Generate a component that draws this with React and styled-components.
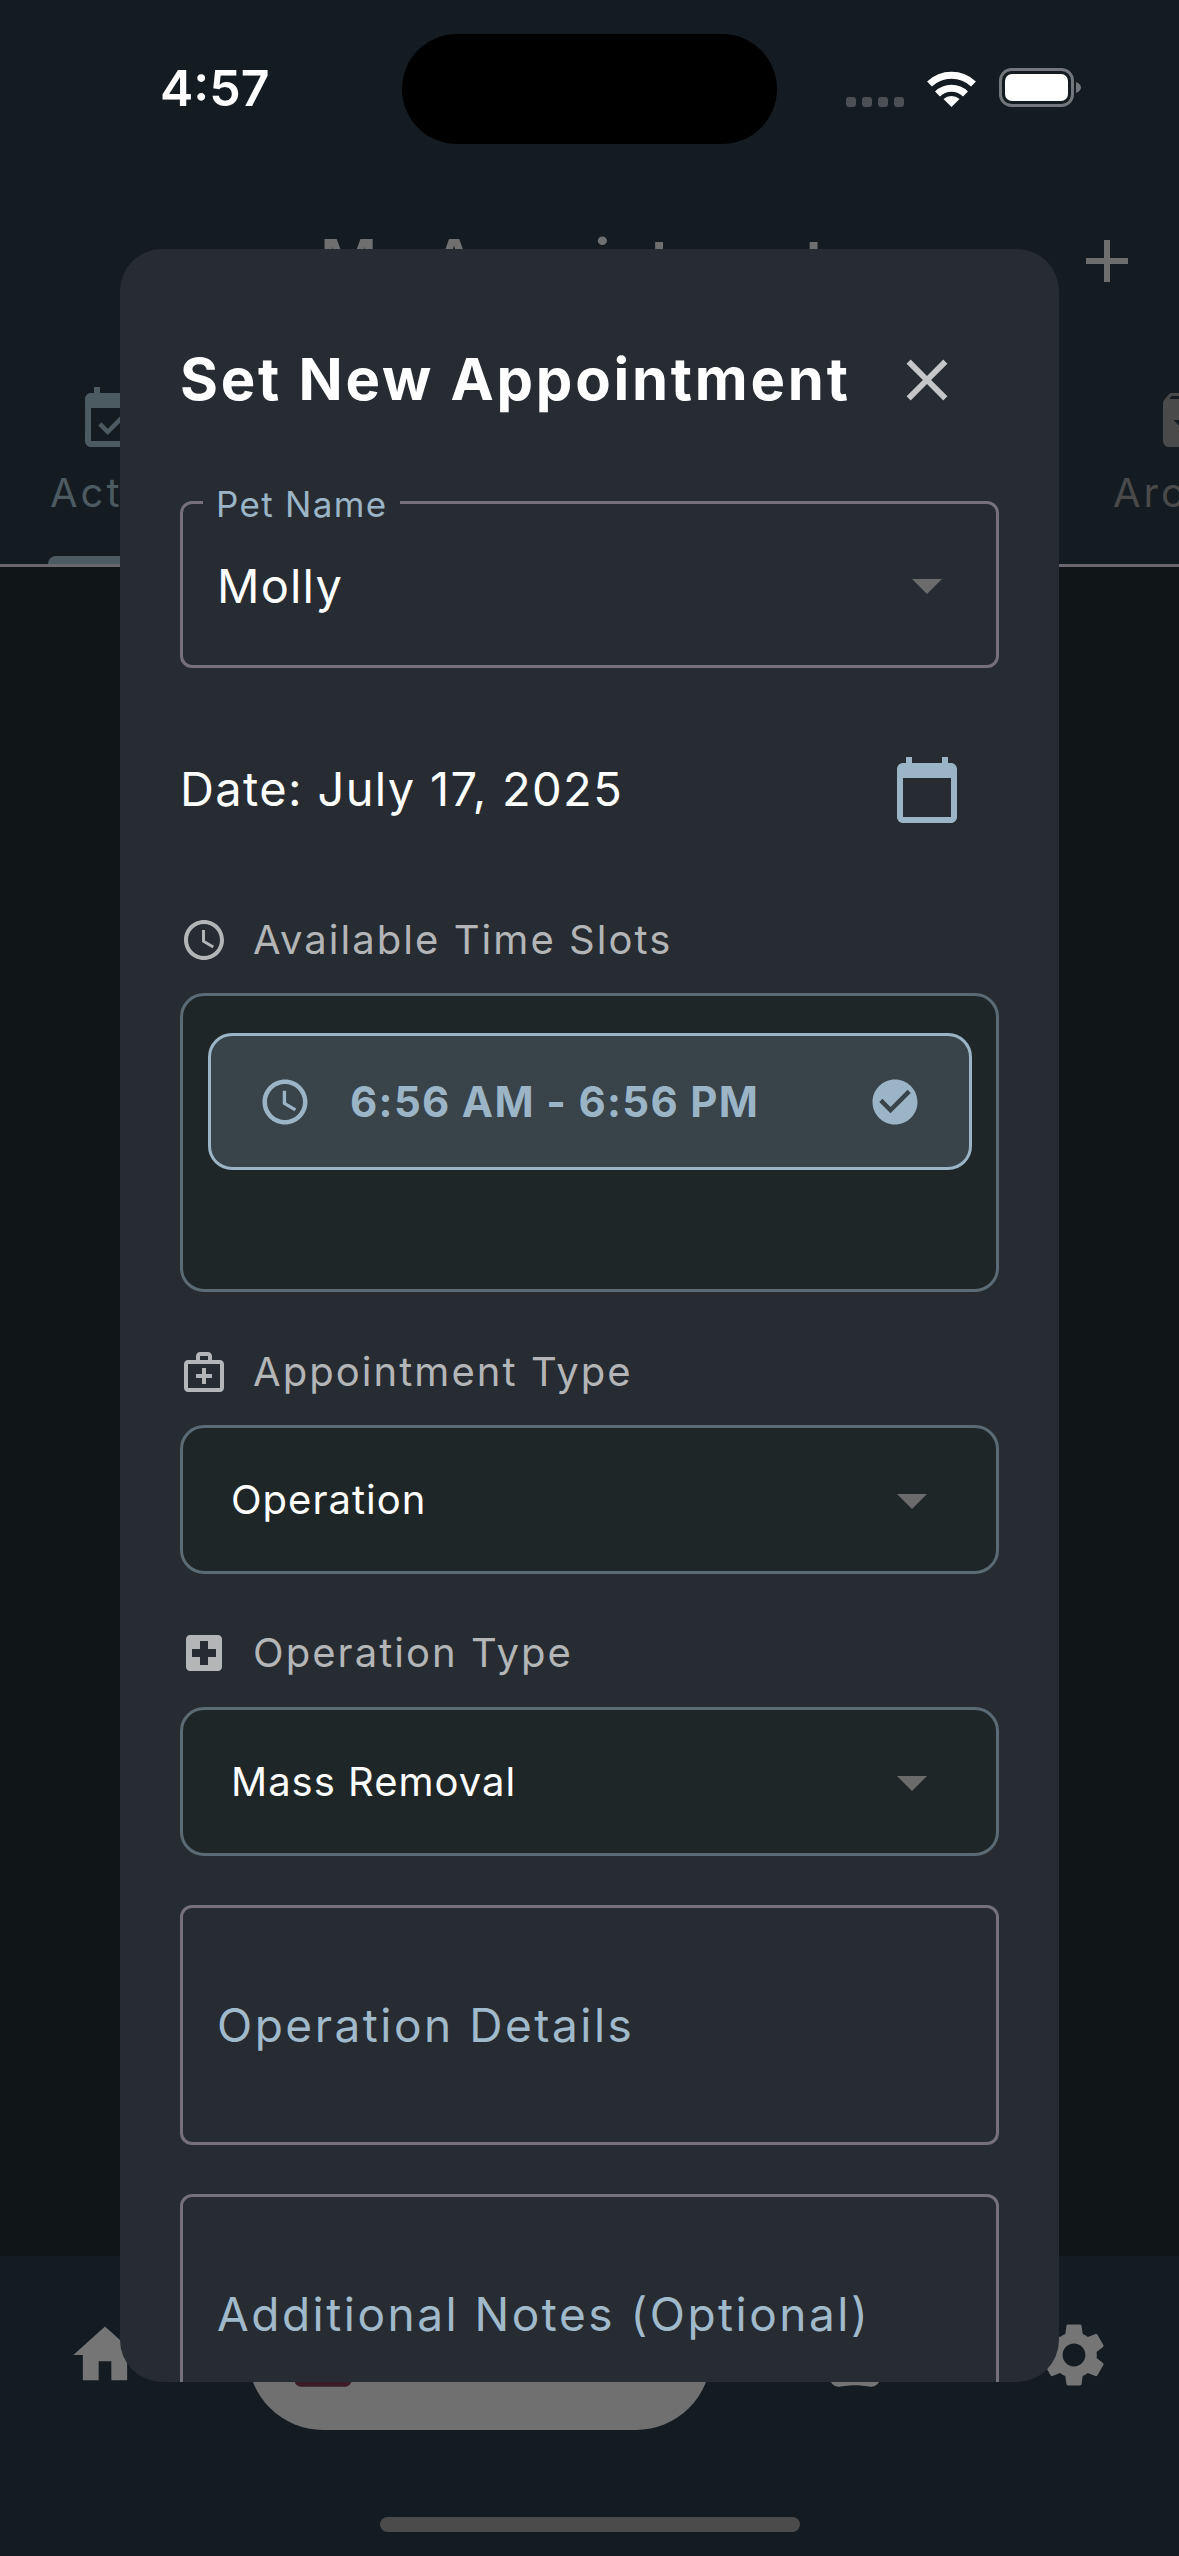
import React from "react";
import styled, { createGlobalStyle } from "styled-components";

const Global = createGlobalStyle`
  html, body { margin: 0; padding: 0; background: #141b21; }
  * { box-sizing: border-box; }
  body { font-family: Inter, "Liberation Sans", sans-serif; -webkit-font-smoothing: antialiased; }
`;

const Screen = styled.div`
  position: relative;
  width: 1179px;
  height: 2556px;
  overflow: hidden;
  background: #141b21;
  display: flex;
  flex-direction: column;
`;
const StatusBar = styled.div`
  height: 180px;
  padding-top: 34px;
  display: grid;
  grid-template-columns: 402px 375px 1fr;
  align-items: start;
`;
const Time = styled.div`
  padding: 22px 0 0 160px;
  color: #fff;
  font-size: 50px;
  line-height: 64px;
  font-weight: 600;
  letter-spacing: 0;
`;
const Island = styled.div`
  height: 110px;
  border-radius: 55px;
  background: #000;
`;
const StatusIcons = styled.div`
  display: flex;
  align-items: flex-end;
  padding: 34px 0 0 69px;
  height: 73px;
`;
const Dots = styled.div`
  display: flex;
  gap: 6px;
  margin-right: 22px;
`;
const Dot = styled.span`
  width: 10px;
  height: 10px;
  border-radius: 3px;
  background: #4c5054;
`;
const Header = styled.div`
  height: 162px;
  display: flex;
  align-items: center;
  justify-content: center;
`;
const Title = styled.div`
  color: #6f6f6f;
  font-size: 62px;
  font-weight: 600;
  letter-spacing: 0.6px;
  margin-left: 2px;
`;
const PlusIcon = styled.svg`
  position: absolute;
  left: 1071px;
  top: 225px;
  width: 72px;
  height: 72px;
  fill: #6e6e6e;
`;
const Tabs = styled.div`
  height: 225px;
  padding: 42px 0 0 48px;
  display: grid;
  grid-template-columns: 128px 929px 170px;
  border-bottom: 3px solid #6b676e;
`;
const Tab = styled.div`
  display: flex;
  flex-direction: column;
  align-items: center;
  color: ${(p) => p.$color};
`;
const TabLabel = styled.span`
  align-self: flex-start;
  margin-left: ${(p) => p.$offset}px;
  font-size: 40px;
  line-height: 48px;
  letter-spacing: 3px;
  white-space: nowrap;
`;
const TabIcon = styled.svg`
  width: 72px;
  height: 72px;
  margin-bottom: 13px;
  fill: currentColor;
`;
const Indicator = styled.div`
  margin-top: auto;
  width: 128px;
  height: 8px;
  border-radius: 8px 8px 0 0;
  background: #4c5a61;
`;
const Body = styled.div`
  flex: 1;
  background: #101518;
`;
const Nav = styled.div`
  height: 300px;
  padding: 24px 0 0 67px;
  display: flex;
  align-items: flex-start;
  background: #141b21;
`;
const NavSlot = styled.div`
  margin-left: ${(p) => p.$gap || 0}px;
  height: 150px;
  display: flex;
  align-items: center;
`;
const NavIcon = styled.svg`
  width: 76px;
  height: 76px;
  fill: ${(p) => p.$color || "#757575"};
`;
const Pill = styled.div`
  margin-left: 105px;
  width: 463px;
  height: 150px;
  border-radius: 75px;
  background: #707070;
  padding-left: 37px;
  display: flex;
  align-items: center;
`;
const HomeBar = styled.div`
  position: absolute;
  left: 380px;
  top: 2517px;
  width: 420px;
  height: 15px;
  border-radius: 8px;
  background: #4b4b4b;
`;

const Modal = styled.div`
  position: absolute;
  left: 120px;
  top: 249px;
  width: 939px;
  height: 2133px;
  border-radius: 42px;
  background: #262c32;
  overflow: hidden;
  padding: 96px 60px 0 60px;
`;
const TitleRow = styled.div`
  height: 70px;
  display: flex;
  align-items: center;
  justify-content: space-between;
  padding-right: 37px;
`;
const ModalTitle = styled.h2`
  margin: 0;
  color: #fff;
  font-size: 58px;
  font-weight: 700;
  letter-spacing: 2.75px;
  white-space: nowrap;
  position: relative;
  top: -1px;
`;
const CloseIcon = styled.svg`
  width: 70px;
  height: 70px;
  fill: #c5c6c8;
`;
const Outlined = styled.div`
  position: relative;
  margin-top: ${(p) => p.$mt}px;
  height: ${(p) => p.$h}px;
  border: 3px solid #75707a;
  border-radius: 12px;
  display: flex;
  align-items: center;
  justify-content: space-between;
  padding: 0 33px 0 34px;
`;
const Notch = styled.span`
  position: absolute;
  left: 20px;
  top: -22px;
  padding: 0 13px;
  background: #262c32;
  color: #9bb5c7;
  font-size: 35px;
  line-height: 44px;
  letter-spacing: 1.3px;
`;
const Value = styled.span`
  position: relative;
  top: 1px;
  color: #fff;
  font-size: 47px;
  letter-spacing: 1.2px;
`;
const Placeholder = styled.span`
  position: relative;
  top: 0;
  color: #a1bacb;
  font-size: 46px;
  letter-spacing: 2.5px;
  white-space: nowrap;
`;
const Caret = styled.svg`
  width: 72px;
  height: 72px;
  fill: #6b6b6b;
`;
const DateRow = styled.div`
  margin-top: 86px;
  height: 72px;
  display: flex;
  align-items: center;
  justify-content: space-between;
  padding-right: 36px;
  color: #fff;
  font-size: 47px;
  letter-spacing: 1.35px;
`;
const DateText = styled.span`
  position: relative;
  top: -2px;
`;
const CalendarIcon = styled.svg`
  width: 72px;
  height: 72px;
  fill: #9bb5c7;
`;
const SectionLabel = styled.div`
  margin-top: ${(p) => p.$mt}px;
  height: 48px;
  display: flex;
  align-items: center;
  gap: 25px;
  color: #b4b5b7;
  font-size: 40px;
  letter-spacing: 2.05px;
`;
const SectionText = styled.span`
  position: relative;
  top: -1px;
`;
const LabelIcon = styled.svg`
  width: 48px;
  height: 48px;
  fill: #b4b5b7;
`;
const SlotBox = styled.div`
  margin-top: 29px;
  height: 299px;
  border: 3px solid #5b6b76;
  border-radius: 24px;
  background: #1f2628;
  padding: 37px 24px 0 25px;
`;
const Slot = styled.div`
  height: 137px;
  border: 3px solid #9bb5c7;
  border-radius: 24px;
  background: #39434a;
  display: flex;
  align-items: center;
  padding: 0 47px 0 47px;
  color: #9bb5c7;
  font-size: 42px;
  font-weight: 700;
  letter-spacing: 1.3px;
`;
const SlotIcon = styled.svg`
  width: 54px;
  height: 54px;
  fill: #9bb5c7;
  flex: none;
  margin-right: ${(p) => p.$mr || 0}px;
  margin-left: ${(p) => (p.$end ? "auto" : "0")};
`;
const Select = styled.div`
  margin-top: ${(p) => p.$mt}px;
  height: 149px;
  border: 3px solid #5b6b76;
  border-radius: 24px;
  background: #1f2628;
  display: flex;
  align-items: center;
  justify-content: space-between;
  padding: 0 48px 0 48px;
  color: #fff;
  font-size: 40px;
  letter-spacing: 1px;
`;

const P = {
  calToday: "M20 3h-1V1h-2v2H7V1H5v2H4c-1.1 0-2 .9-2 2v16c0 1.1.9 2 2 2h16c1.1 0 2-.9 2-2V5c0-1.1-.9-2-2-2zm0 18H4V8h16v13z",
  clock: "M11.99 2C6.47 2 2 6.48 2 12s4.47 10 9.99 10C17.52 22 22 17.52 22 12S17.52 2 11.99 2zM12 20c-4.42 0-8-3.58-8-8s3.58-8 8-8 8 3.58 8 8-3.58 8-8 8zm.5-13H11v6l5.25 3.15.75-1.23-4.5-2.67z",
  medical: "M20 6h-4V4c0-1.1-.9-2-2-2h-4c-1.1 0-2 .9-2 2v2H4c-1.1 0-2 .9-2 2v12c0 1.1.9 2 2 2h16c1.1 0 2-.9 2-2V8c0-1.1-.9-2-2-2zM10 4h4v2h-4V4zm10 16H4V8h16v12zM13 10h-2v3H8v2h3v3h2v-3h3v-2h-3z",
  hospital: "M19 3H5c-1.1 0-1.99.9-1.99 2L3 19c0 1.1.9 2 2 2h14c1.1 0 2-.9 2-2V5c0-1.1-.9-2-2-2zm-1 11h-4v4h-4v-4H6v-4h4V6h4v4h4v4z",
  check: "M12 2C6.48 2 2 6.48 2 12s4.48 10 10 10 10-4.48 10-10S17.52 2 12 2zm-2 15l-5-5 1.41-1.41L10 14.17l7.59-7.59L19 8l-9 9z",
  home: "M10 20v-6h4v6h5v-8h3L12 3 2 12h3v8z",
  gear: "M19.14 12.94c.04-.3.06-.61.06-.94 0-.32-.02-.64-.07-.94l2.03-1.58c.18-.14.23-.41.12-.61l-1.92-3.32c-.12-.22-.37-.29-.59-.22l-2.39.96c-.5-.38-1.03-.7-1.62-.94l-.36-2.54c-.04-.24-.24-.41-.48-.41h-3.84c-.24 0-.43.17-.47.41l-.36 2.54c-.59.24-1.13.57-1.62.94l-2.39-.96c-.22-.08-.47 0-.59.22L2.74 8.87c-.12.21-.08.47.12.61l2.03 1.58c-.05.3-.09.63-.09.94s.02.64.07.94l-2.03 1.58c-.18.14-.23.41-.12.61l1.92 3.32c.12.22.37.29.59.22l2.39-.96c.5.38 1.03.7 1.62.94l.36 2.54c.05.24.24.41.48.41h3.84c.24 0 .44-.17.47-.41l.36-2.54c.59-.24 1.13-.56 1.62-.94l2.39.96c.22.08.47 0 .59-.22l1.92-3.32c.12-.22.07-.47-.12-.61l-2.01-1.58zM12 15.6c-1.98 0-3.6-1.62-3.6-3.6s1.62-3.6 3.6-3.6 3.6 1.62 3.6 3.6-1.62 3.6-3.6 3.6z",
  pets: "M2 9.5a2.5 2.5 0 1 0 5 0a2.5 2.5 0 1 0-5 0zM6.5 5.5a2.5 2.5 0 1 0 5 0a2.5 2.5 0 1 0-5 0zM12.5 5.5a2.5 2.5 0 1 0 5 0a2.5 2.5 0 1 0-5 0zM17 9.5a2.5 2.5 0 1 0 5 0a2.5 2.5 0 1 0-5 0zM17.34 14.86c-.87-1.02-1.6-1.89-2.48-2.91-.46-.54-1.05-1.08-1.75-1.32-.11-.04-.22-.07-.33-.09-.25-.04-.52-.04-.78-.04s-.53 0-.79.05c-.11.02-.22.05-.33.09-.7.24-1.28.78-1.75 1.32-.87 1.02-1.6 1.89-2.48 2.91-1.31 1.31-2.92 2.76-2.62 4.79.29 1.02 1.02 2.03 2.33 2.32.73.15 3.06-.44 5.54-.44h.18c2.48 0 4.81.58 5.54.44 1.31-.29 2.04-1.31 2.33-2.32.31-2.04-1.3-3.49-2.61-4.8z",
  eventFill: "M19 4h-1V2h-2v2H8V2H6v2H5a2 2 0 0 0-2 2v14a2 2 0 0 0 2 2h14a2 2 0 0 0 2-2V6a2 2 0 0 0-2-2z",
  eventAvail: "M16.53 11.06L15.47 10l-4.88 4.88-2.12-2.12-1.06 1.06L10.59 17l5.94-5.94zM19 3h-1V1h-2v2H8V1H6v2H5c-1.11 0-1.99.9-1.99 2L3 19c0 1.1.89 2 2 2h14c1.1 0 2-.9 2-2V5c0-1.1-.9-2-2-2zm0 16H5V8h14v11z",
  archive: "M20.54 5.23l-1.39-1.68C18.88 3.21 18.47 3 18 3H6c-.47 0-.88.21-1.16.55L3.46 5.23C3.17 5.57 3 6.02 3 6.5V19c0 1.1.9 2 2 2h14c1.1 0 2-.9 2-2V6.5c0-.48-.17-.93-.46-1.27zM12 17.5L6.5 12H10v-2h4v2h3.5L12 17.5zM5.12 5l.81-1h12l.94 1H5.12z",
  close: "M19 6.41L17.59 5 12 10.59 6.41 5 5 6.41 10.59 12 5 17.59 6.41 19 12 13.41 17.59 19 19 17.59 13.41 12z",
  add: "M19 13h-6v6h-2v-6H5v-2h6V5h2v6h6v2z",
  drop: "M7 10l5 5 5-5z",
};

const WifiIcon = styled.svg`
  width: 51px;
  height: 37px;
  margin-right: 22px;
`;
const BatteryIcon = styled.svg`
  width: 82px;
  height: 39px;
`;

const Wifi = () => (
  <WifiIcon viewBox="0 0 51 37">
    <g fill="none" stroke="#fff" strokeWidth="7">
      <path d="M3.5 14 A 32 32 0 0 1 47.5 14" />
      <path d="M11.5 24 A 20 20 0 0 1 39.5 24" />
    </g>
    <path d="M17.5 29 A 12 12 0 0 1 33.5 29 L25.5 37 Z" fill="#fff" />
  </WifiIcon>
);

const Battery = () => (
  <BatteryIcon viewBox="0 0 82 39">
    <rect x="1.5" y="1.5" width="72" height="36" rx="11" fill="none" stroke="#73777b" strokeWidth="3" />
    <rect x="6" y="6" width="63" height="27" rx="7" fill="#fff" />
    <path d="M77 14 C80 15 82 17 82 19.5 C82 22 80 24 77 25 Z" fill="#73777b" />
  </BatteryIcon>
);

const Ic = ({ as: C, d, ...rest }) => (
  <C viewBox="0 0 24 24" {...rest}>
    <path d={d} />
  </C>
);

export default function App() {
  return (
    <>
      <Global />
      <Screen>
        <StatusBar>
          <Time>4:57</Time>
          <Island />
          <StatusIcons>
            <Dots>
              <Dot />
              <Dot />
              <Dot />
              <Dot />
            </Dots>
            <Wifi />
            <Battery />
          </StatusIcons>
        </StatusBar>
        <Header>
          <Title>My Appointments</Title>
        </Header>
        <Ic as={PlusIcon} d={P.add} />
        <Tabs>
          <Tab $color="#4c5a61">
            <Ic as={TabIcon} d={P.eventAvail} />
            <TabLabel $offset={2}>Active</TabLabel>
            <Indicator />
          </Tab>
          <Tab $color="#4a4a4a" />
          <Tab $color="#4a4a4a">
            <Ic as={TabIcon} d={P.archive} />
            <TabLabel $offset={8}>Archived</TabLabel>
          </Tab>
        </Tabs>
        <Body />
        <Nav>
          <NavSlot>
            <Ic as={NavIcon} d={P.home} />
          </NavSlot>
          <Pill>
            <Ic as={NavIcon} d={P.eventFill} $color="#3c1b28" />
          </Pill>
          <NavSlot $gap={106}>
            <Ic as={NavIcon} d={P.pets} />
          </NavSlot>
          <NavSlot $gap={143}>
            <Ic as={NavIcon} d={P.gear} />
          </NavSlot>
        </Nav>
        <HomeBar />
        <Modal>
          <TitleRow>
            <ModalTitle>Set New Appointment</ModalTitle>
            <Ic as={CloseIcon} d={P.close} />
          </TitleRow>
          <Outlined $mt={86} $h={167}>
            <Notch>Pet Name</Notch>
            <Value>Molly</Value>
            <Ic as={Caret} d={P.drop} />
          </Outlined>
          <DateRow>
            <DateText>Date: July 17, 2025</DateText>
            <Ic as={CalendarIcon} d={P.calToday} />
          </DateRow>
          <SectionLabel $mt={90}>
            <Ic as={LabelIcon} d={P.clock} />
            <SectionText>Available Time Slots</SectionText>
          </SectionLabel>
          <SlotBox>
            <Slot>
              <Ic as={SlotIcon} d={P.clock} $mr={38} />
              6:56 AM - 6:56 PM
              <Ic as={SlotIcon} d={P.check} $end />
            </Slot>
          </SlotBox>
          <SectionLabel $mt={56}>
            <Ic as={LabelIcon} d={P.medical} />
            <SectionText>Appointment Type</SectionText>
          </SectionLabel>
          <Select $mt={29}>
            Operation
            <Ic as={Caret} d={P.drop} />
          </Select>
          <SectionLabel $mt={55}>
            <Ic as={LabelIcon} d={P.hospital} />
            <SectionText>Operation Type</SectionText>
          </SectionLabel>
          <Select $mt={30}>
            Mass Removal
            <Ic as={Caret} d={P.drop} />
          </Select>
          <Outlined $mt={49} $h={240}>
            <Placeholder>Operation Details</Placeholder>
          </Outlined>
          <Outlined $mt={49} $h={240}>
            <Placeholder>Additional Notes (Optional)</Placeholder>
          </Outlined>
        </Modal>
      </Screen>
    </>
  );
}
